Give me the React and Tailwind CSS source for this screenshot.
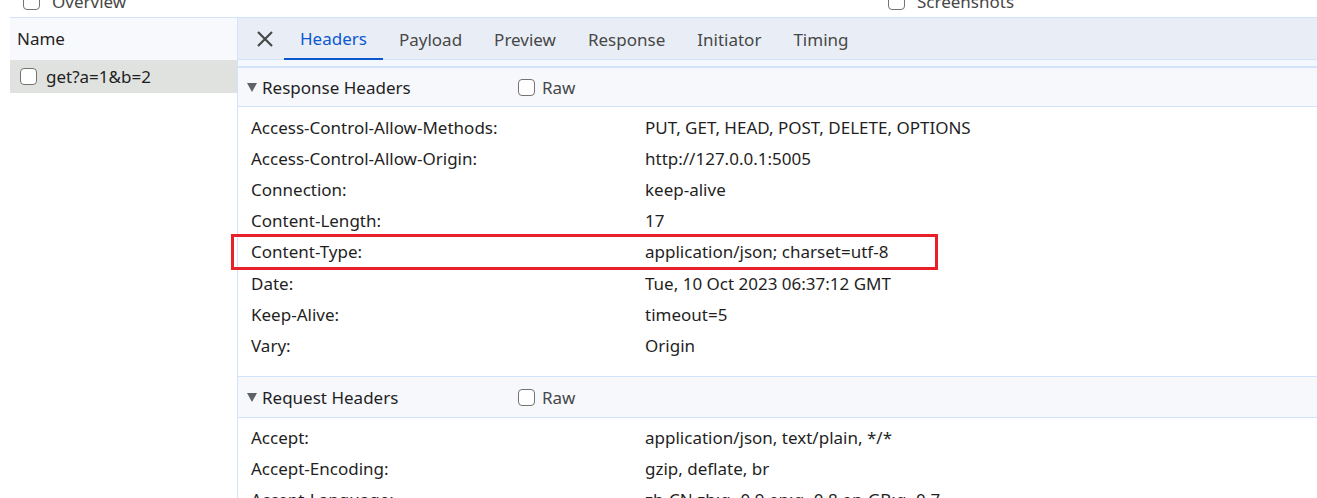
import React from 'react';

const responseHeaders = [
  ['Access-Control-Allow-Methods:', 'PUT, GET, HEAD, POST, DELETE, OPTIONS'],
  ['Access-Control-Allow-Origin:', 'http://127.0.0.1:5005'],
  ['Connection:', 'keep-alive'],
  ['Content-Length:', '17'],
  ['Content-Type:', 'application/json; charset=utf-8', true],
  ['Date:', 'Tue, 10 Oct 2023 06:37:12 GMT'],
  ['Keep-Alive:', 'timeout=5'],
  ['Vary:', 'Origin'],
];

const requestHeaders = [
  ['Accept:', 'application/json, text/plain, */*'],
  ['Accept-Encoding:', 'gzip, deflate, br'],
  ['Accept-Language:', 'zh-CN,zh;q=0.9,en;q=0.8,en-GB;q=0.7'],
];

const tabs = ['Headers', 'Payload', 'Preview', 'Response', 'Initiator', 'Timing'];

const Checkbox = () => (
  <span className="inline-block w-[17px] h-[17px] rounded-[4px] border-[1.5px] border-[#737373] bg-white shrink-0" />
);

const Triangle = () => (
  <svg width="10" height="9" viewBox="0 0 10 9" className="shrink-0">
    <path d="M0 0 H10 L5 9 Z" fill="#5f6368" />
  </svg>
);

const SectionHeader = ({ title, first }) => (
  <div className={`h-[41px] shrink-0 flex items-center bg-[#f6f8fc] border-b border-[#d3e3fd] pl-[9px] pt-[1px] ${first ? 'border-t-2' : ''}`}>
    <Triangle />
    <span className="ml-[5px] w-[256px]">{title}</span>
    <Checkbox />
    <span className="ml-[7px] text-[#474747]">Raw</span>
  </div>
);

const Row = ({ name, value, highlight }) => (
  <div
    className={`flex items-center shrink-0 ${
      highlight
        ? 'relative z-10 h-[36px] -my-[2px] w-[707px] -ml-[7px] pl-[7px] outline-[3px] outline-[#e8202a] -outline-offset-[3px]'
        : 'h-[31px]'
    }`}
  >
    <span className="w-[407px] pl-[13px] shrink-0">{name}</span>
    <span className="whitespace-nowrap">{value}</span>
  </div>
);

export default function App() {
  return (
    <div
      className="w-[1317px] h-[498px] overflow-hidden bg-white text-[17px] text-[#1f1f1f]"
      style={{ fontFamily: '"Noto Sans", "Open Sans", sans-serif' }}
    >
      {/* clipped toolbar row */}
      <div className="h-[18px] overflow-hidden flex items-end pl-[10px]">
        <div className="w-full h-[1px] bg-[#d3e3fd] relative">
          <div className="absolute left-[13px] -top-[28px] flex items-center gap-[12px] text-[#474747]">
            <Checkbox />
            <span>Overview</span>
          </div>
          <div className="absolute left-[878px] -top-[28px] flex items-center gap-[12px] text-[#474747]">
            <Checkbox />
            <span>Screenshots</span>
          </div>
        </div>
      </div>

      <div className="flex h-[480px] pl-[10px]">
        {/* left list */}
        <div className="w-[227px] shrink-0">
          <div className="h-[42px] bg-[#f8f9fc] flex items-center pl-[7px]">Name</div>
          <div className="h-[33px] bg-[#e0e2e0] flex items-center pl-[10px] gap-[9px]">
            <Checkbox />
            <span>get?a=1&amp;b=2</span>
          </div>
        </div>

        {/* details panel */}
        <div className="flex-1 min-w-0 border-l border-[#d3e3fd] flex flex-col">
          <div className="h-[42px] shrink-0 bg-[#e9eef6] border-b border-[#d3e3fd] flex items-stretch pl-[18px]">
            <div className="flex items-center pr-[10px]">
              <svg width="18" height="18" viewBox="0 0 18 18">
                <path d="M2 2 L16 16 M16 2 L2 16" stroke="#474747" strokeWidth="2.2" />
              </svg>
            </div>
            {tabs.map((t, i) => (
              <div
                key={t}
                className={`flex items-center px-[16px] pt-[2px] ${
                  i === 0 ? 'text-[#0b57d0] border-b-2 border-[#0b57d0] -mb-[1px]' : 'text-[#474747]'
                }`}
              >
                {t}
              </div>
            ))}
          </div>
          <div className="h-[6px] shrink-0 bg-[#f4f7fc]" />
          <SectionHeader title="Response Headers" first />
          <div className="pt-[5px] pb-[15px] border-b border-[#d3e3fd] shrink-0 flex flex-col">
            {responseHeaders.map(([n, v, h]) => (
              <Row key={n} name={n} value={v} highlight={h} />
            ))}
          </div>
          <SectionHeader title="Request Headers" />
          <div className="pt-[4px] shrink-0 flex flex-col">
            {requestHeaders.map(([n, v]) => (
              <Row key={n} name={n} value={v} />
            ))}
          </div>
        </div>
      </div>
    </div>
  );
}
